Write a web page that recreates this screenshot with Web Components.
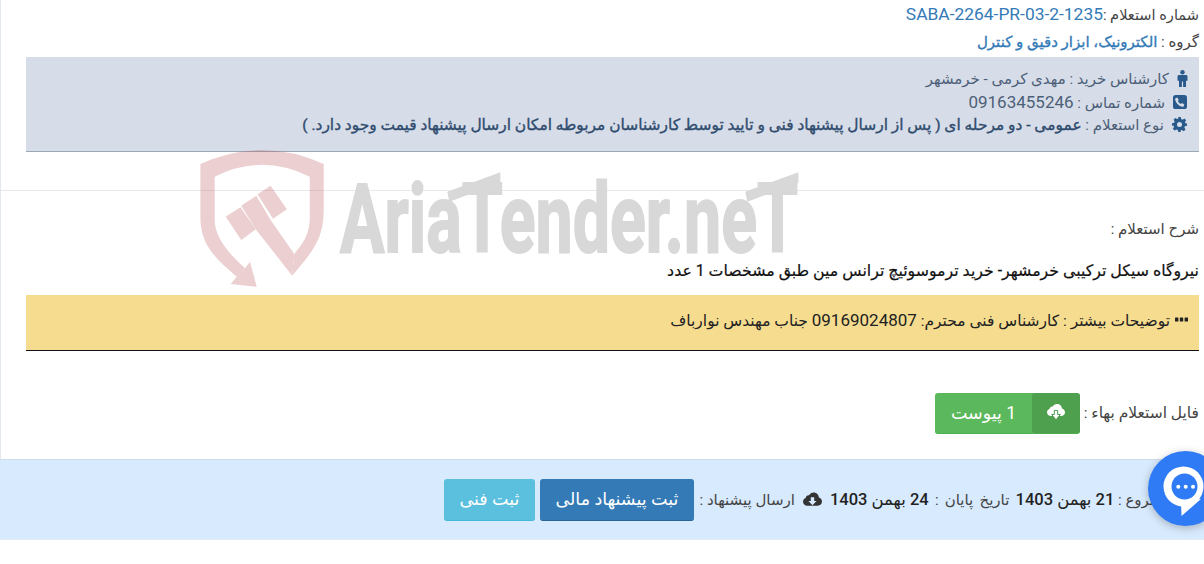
<!DOCTYPE html>
<html lang="fa" dir="rtl">
<head>
<meta charset="utf-8">
<title>استعلام</title>
<style>
  html, body { margin: 0; background: #fff; }
  body { font-family: Roboto, "DejaVu Sans", sans-serif; font-size: 15px; color: #444; }
</style>
</head>
<body>
<tender-page>
  <tender-head>
    <span slot="number">SABA-2264-PR-03-2-1235</span>
    <span slot="group">الکترونیک، ابزار دقیق و کنترل</span>
  </tender-head>
  <info-panel>
    <info-row icon="person">کارشناس خرید : مهدی کرمی - خرمشهر</info-row>
    <info-row icon="phone">شماره تماس : <span style="font-size:17px">09163455246</span></info-row>
    <info-row icon="gear">نوع استعلام : <strong-text>عمومی - دو مرحله ای ( پس از ارسال پیشنهاد فنی و تایید توسط کارشناسان مربوطه امکان ارسال پیشنهاد قیمت وجود دارد. )</strong-text></info-row>
  </info-panel>
  <tender-desc title-text="شرح استعلام :">نیروگاه سیکل ترکیبی خرمشهر- خرید ترموسوئیچ ترانس مین طبق مشخصات 1 عدد</tender-desc>
  <note-box>توضیحات بیشتر : کارشناس فنی محترم: <span style="font-size:17px">09169024807</span> جناب مهندس نوارباف</note-box>
  <attach-row label="فایل استعلام بهاء :">1 پیوست</attach-row>
  <water-mark></water-mark>
  <submit-bar slot="bar"></submit-bar>
</tender-page>
<chat-fab></chat-fab>

<script>
const ICONS = {
  person: '<svg width="11" height="17" viewBox="0 0 11 17"><circle cx="5.500" cy="2.200" r="2.200" fill="currentColor"/><path d="M2 5h7c.9 0 1.500.7 1.500 1.500v4.300H9V17H6.100v-5.600h-1.200V17H2v-6.200H.5V6.500C.5 5.700 1.100 5 2 5z" fill="currentColor"/></svg>',
  phone: '<svg width="14" height="14" viewBox="0 0 14 14"><rect width="14" height="14" rx="2.600" fill="currentColor"/><path d="M4.300 2.600l1.500 2.300-.9 1.100c.6 1.300 1.700 2.400 3 3l1.100-.9 2.300 1.500-.6 1.700c-.2.400-.6.600-1 .5C6 11.300 2.800 8.100 2.100 4.200c-.1-.4.100-.8.500-1z" fill="#d6dde8"/></svg>',
  gear: '<svg width="15" height="15" viewBox="0 0 24 24"><path fill="currentColor" fill-rule="evenodd" d="M10 0h4l.7 3.300 2.200.9 2.900-1.800 2.800 2.800-1.800 2.900.9 2.200L24 10v4l-3.300.7-.9 2.200 1.800 2.900-2.800 2.800-2.900-1.800-2.200.9L14 24h-4l-.7-3.300-2.200-.9-2.900 1.800-2.800-2.800 1.800-2.900-.9-2.200L0 14v-4l3.300-.7.9-2.200-1.800-2.900 2.800-2.800 2.900 1.800 2.200-.9zM12 8a4 4 0 1 0 0 8 4 4 0 0 0 0-8z"/></svg>',
  dots: '<svg width="13" height="5" viewBox="0 0 13 5"><rect width="3.400" height="4" y=".5" rx=".5" fill="currentColor"/><rect x="4.800" width="3.400" height="4" y=".5" rx=".5" fill="currentColor"/><rect x="9.600" width="3.400" height="4" y=".5" rx=".5" fill="currentColor"/></svg>',
  cloud: '<svg width="19" height="15" viewBox="0 0 20 15"><path fill="currentColor" fill-rule="evenodd" d="M4.500 14C2 14 0 12.200 0 9.800c0-1.800 1.100-3.300 2.800-3.900C3 4 4.500 2.800 6.300 3 7.300 1.200 9.100 0 11.200 0c3 0 5.400 2.300 5.500 5.300 1.900.6 3.300 2.300 3.300 4.300 0 2.500-2 4.400-4.500 4.400zM8.200 5v4.200H5.700l4.300 4.300 4.300-4.300h-2.500V5z"/></svg>',
  upload: '<svg width="18" height="17" viewBox="0 0 18 17"><path fill="#fff" d="M4 12C1.800 12 0 10.400 0 8.300c0-1.600 1-2.900 2.500-3.400C2.800 3.300 4.100 2.300 5.700 2.500 6.500 1 8.100 0 10 0c2.700 0 4.900 2 5 4.600 1.700.5 3 2 3 3.800C18 10.500 16.200 12 14 12z"/><path fill="#fff" stroke="#4e9f4e" d="M7.300 6.500h3.400v4h2.600L9 15.800 4.700 10.500h2.600z"/></svg>'
};

class TenderPage extends HTMLElement {
  constructor () {
    super();
    this.attachShadow({mode: 'open'});
    this.shadowRoot.innerHTML = `
      <style>
        :host { display: block; position: relative; height: 564px; overflow: hidden; }
        .side { border-left: 1px solid #e3e8ee; padding-bottom: 25px; }
      </style>
      <div class="side"><slot></slot></div>
      <slot name="bar"></slot>
    `;
  }
}

class TenderHead extends HTMLElement {
  constructor () {
    super();
    this.attachShadow({mode: 'open'});
    this.shadowRoot.innerHTML = `
      <style>
        :host { display: block; padding: 1px 5px 0 0; line-height: 27px; color: #444; }
        div { height: 27px; white-space: nowrap; }
        .lb { font-size: 14.600px; }
        .num { color: #337ab7; font-size: 17.400px; }
        .grp { color: #337ab7; -webkit-text-stroke: .35px #337ab7; font-size: 15px; }
        div + div { padding-top: 1px; }
      </style>
      <div><span class="lb">شماره استعلام :</span><span class="num"><slot name="number"></slot></span></div>
      <div>گروه : <span class="grp"><slot name="group"></slot></span></div>
    `;
  }
}

class StrongText extends HTMLElement {
  constructor () {
    super();
    this.attachShadow({mode: 'open'});
    this.shadowRoot.innerHTML = `
      <style>
        :host { display: inline; color: #2f4b6e; font-size: 15.450px; -webkit-text-stroke: .35px #2f4b6e; }
      </style>
      <slot></slot>
    `;
  }
}

class InfoPanel extends HTMLElement {
  constructor () {
    super();
    this.attachShadow({mode: 'open'});
    this.shadowRoot.innerHTML = `
      <style>
        :host { display: block; box-sizing: border-box; margin: 1px 5px 0 0; width: 1173px; height: 95px;
          padding: 10px 11px 0 0; background: #d6dde8; border-bottom: 1px solid #9aa8b8; color: #4d5f78; }
      </style>
      <slot></slot>
    `;
  }
}

class InfoRow extends HTMLElement {
  constructor () {
    super();
    this.attachShadow({mode: 'open'});
    const wide = this.getAttribute('icon') !== 'person';
    this.shadowRoot.innerHTML = `
      <style>
        :host { display: flex; align-items: center; gap: 8px; height: 23px; white-space: nowrap; }
        .i { display: flex; color: #2a5a8c; ${wide ? 'margin-right: 1px;' : ''} }
      </style>
      <span class="i">${ICONS[this.getAttribute('icon')]}</span>
      <span><slot></slot></span>
    `;
  }
}

class TenderDesc extends HTMLElement {
  constructor () {
    super();
    this.attachShadow({mode: 'open'});
    this.shadowRoot.innerHTML = `
      <style>
        :host { display: block; margin-top: 38px; border-top: 1px solid #e8e8e8; padding: 25px 5px 0 0; color: #444; }
        .t { height: 27px; line-height: 27px; }
        .d { margin-top: 14px; height: 32px; line-height: 27px; font-size: 15.800px; color: #111; -webkit-text-stroke: .2px #111; white-space: nowrap; }
      </style>
      <div class="t">${this.getAttribute('title-text')}</div>
      <div class="d"><slot></slot></div>
    `;
  }
}

class NoteBox extends HTMLElement {
  constructor () {
    super();
    this.attachShadow({mode: 'open'});
    this.shadowRoot.innerHTML = `
      <style>
        :host { display: flex; align-items: center; gap: 5px; box-sizing: border-box; width: 1173px; height: 56px;
          margin: 6px 5px 0 0; padding: 0 11px 6px 0; background: #f5dc8f; border-bottom: 1px solid #111; color: #222; font-size: 15.500px; white-space: nowrap; }
      </style>
      ${ICONS.dots}
      <span><slot></slot></span>
    `;
  }
}

class AttachRow extends HTMLElement {
  constructor () {
    super();
    this.attachShadow({mode: 'open'});
    this.shadowRoot.innerHTML = `
      <style>
        :host { display: flex; align-items: center; gap: 4px; margin-top: 41px; padding-right: 5px; height: 42px; color: #444; }
        .lb { width: 115px; white-space: nowrap; font-size: 15.500px; }
        .btn { display: flex; height: 41px; width: 145px; border-radius: 3px; overflow: hidden; background: #5cb85c;
          color: #fff; font-size: 17.500px; border-bottom: 1px solid #4cae4c; box-sizing: border-box; }
        .ic { width: 48px; background: #4e9f4e; display: flex; align-items: center; justify-content: center; border-radius: 3px; }
        .tx { flex: 1; display: flex; align-items: center; justify-content: center; }
      </style>
      <span class="lb">${this.getAttribute('label')}</span>
      <div class="btn">
        <span class="ic">${ICONS.upload}</span>
        <span class="tx"><slot></slot></span>
      </div>
    `;
  }
}

class SubmitBar extends HTMLElement {
  constructor () {
    super();
    this.attachShadow({mode: 'open'});
    this.shadowRoot.innerHTML = `
      <style>
        :host { display: flex; align-items: center; box-sizing: border-box; height: 81px; padding-right: 8px;
          background: #d8eafd; border-top: 1px solid #cfdcea; border-bottom: 1px solid #e4ebf2; color: #444; white-space: nowrap; }
        b { font-weight: 500; color: #222; font-size: 16.500px; }
        .end { word-spacing: 2.500px; }
        .send { min-width: 97px; }
        .ic { margin: 0 8px 0 8px; color: #333; display: inline-flex; }
        button { font: inherit; font-size: 17.500px; color: #fff; border-radius: 3px; height: 42px; border: 0; padding: 0; cursor: pointer; }
        .fin { background: #337ab7; border-bottom: 1px solid #2a6496; width: 154px; margin-right: 4px; }
        .tec { background: #5bc0de; border-bottom: 1px solid #46b8da; width: 91px; margin-right: 5px; }
      </style>
      <span>تاریخ شروع : <b>21 بهمن 1403</b><span class="end"> تاریخ پایان : </span><b>24 بهمن 1403</b></span>
      <span class="ic">${ICONS.cloud}</span>
      <span class="send">ارسال پیشنهاد :</span>
      <button class="fin">ثبت پیشنهاد مالی</button>
      <button class="tec">ثبت فنی</button>
    `;
  }
}

class WaterMark extends HTMLElement {
  constructor () {
    super();
    this.attachShadow({mode: 'open'});
    this.shadowRoot.innerHTML = `
      <style>
        :host { position: absolute; left: 198px; top: 148px; width: 610px; height: 142px; pointer-events: none; }
        svg { display: block; overflow: visible; }
        text { font-family: Roboto, sans-serif; font-weight: 700; }
      </style>
      <svg width="610" height="142" viewBox="198 148 610 142" direction="ltr">
        <g fill="rgb(192,98,105)" opacity=".3">
          <path d="M200.400 164Q261.600 136 323.700 164V210C323.700 240 312 252 292.200 275.700L294.300 254C303 243 309.800 235 309.800 216.700V176.700Q261.600 153 214.700 176.700V220C214.700 235 225 250 245 268.300L236.700 276.700C215 258 200.400 245 200.400 216.700Z"/>
          <path d="M250 261.700L256.700 286.700 230.700 284 236.700 276.700 245 268.300z"/>
          <path d="M225.700 216.700L240.400 207.300 255.900 229.300 241.200 240z"/>
          <path d="M241.200 205.700L256.300 195.700 270.600 220 294.300 254 292.200 275.700 256.300 230z"/>
          <path d="M257.600 194.300L270.600 185.700 286.900 209.300 273 218.700z"/>
        </g>
        <g fill="#d8d8d8">
          <text x="340" y="252" font-size="97" stroke="#d8d8d8" stroke-width="2" textLength="458" lengthAdjust="spacingAndGlyphs">AriaTender.neT</text>
          <path d="M447.300 191.700L500.400 172.300V182.700L449.400 201.700z"/>
          <path d="M745.300 191.700L798.400 172.300V182.700L747.300 201.700z"/>
        </g>
      </svg>
    `;
  }
}

class ChatFab extends HTMLElement {
  constructor () {
    super();
    this.attachShadow({mode: 'open'});
    this.shadowRoot.innerHTML = `
      <style>
        :host { position: fixed; left: 1148px; top: 451px; width: 75px; height: 75px; border-radius: 50%;
          background: #2f7bf6; box-shadow: 0 2px 8px rgba(0,0,0,.25); display: block; }
        svg { display: block; }
      </style>
      <svg width="75" height="75" viewBox="0 0 75 75">
        <circle cx="35.500" cy="35.500" r="20" fill="#fff"/>
        <path fill="#fff" d="M33 50l20-2-19.500 17z"/>
        <circle cx="36.500" cy="35.500" r="13" fill="#2f7bf6"/>
        <circle cx="30.300" cy="35.700" r="2" fill="#fff"/><circle cx="37.700" cy="35.700" r="2" fill="#fff"/><circle cx="45" cy="35.700" r="2" fill="#fff"/>
      </svg>
    `;
  }
}

customElements.define('tender-page', TenderPage);
customElements.define('tender-head', TenderHead);
customElements.define('strong-text', StrongText);
customElements.define('info-panel', InfoPanel);
customElements.define('info-row', InfoRow);
customElements.define('tender-desc', TenderDesc);
customElements.define('note-box', NoteBox);
customElements.define('attach-row', AttachRow);
customElements.define('submit-bar', SubmitBar);
customElements.define('water-mark', WaterMark);
customElements.define('chat-fab', ChatFab);
</script>
</body>
</html>
